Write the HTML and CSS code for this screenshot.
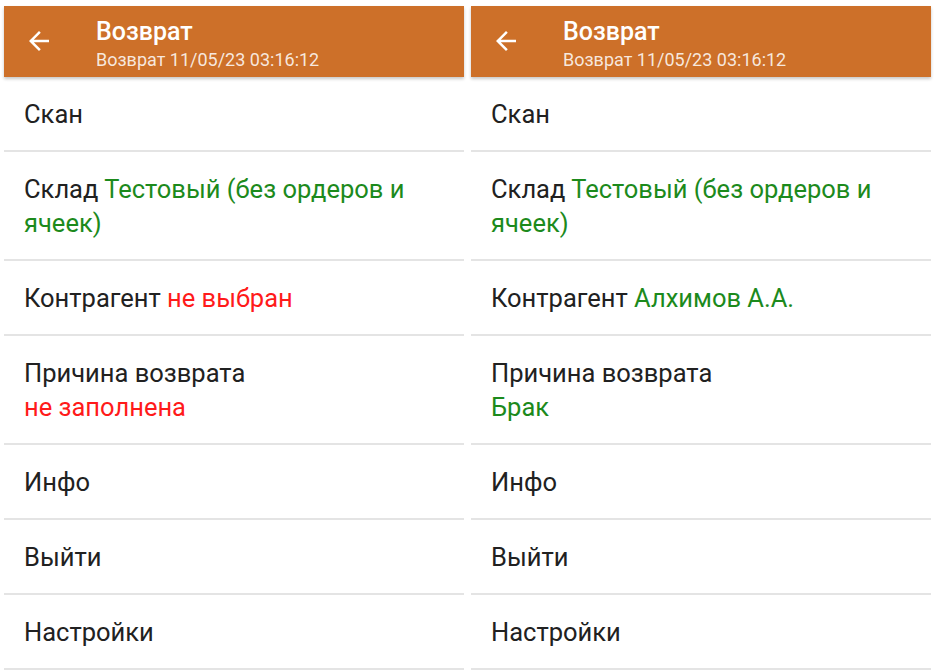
FILE: index.html
```html
<!DOCTYPE html>
<html lang="ru">
<head>
    <meta charset="UTF-8">
    <meta name="viewport" content="width=device-width, initial-scale=1.0">
    <title>Возврат</title>
    <link rel="stylesheet" href="styles.css">
</head>
<body>
    <div class="screen">
        <header class="bar">
            <svg class="back" viewBox="0 0 24 24"><path d="M20 11H7.83l5.59-5.59L12 4l-8 8 8 8 1.41-1.41L7.83 13H20v-2z"/></svg>
            <div class="titles">
                <div class="title">Возврат</div>
                <div class="subtitle">Возврат 11/05/23 03:16:12</div>
            </div>
        </header>
        <ul class="menu">
            <li>Скан</li>
            <li>Склад <span class="ok">Тестовый (без ордеров и ячеек)</span></li>
            <li>Контрагент <span class="bad">не выбран</span></li>
            <li>Причина возврата<br><span class="bad">не заполнена</span></li>
            <li>Инфо</li>
            <li>Выйти</li>
            <li>Настройки</li>
        </ul>
    </div>

    <div class="screen">
        <header class="bar">
            <svg class="back" viewBox="0 0 24 24"><path d="M20 11H7.83l5.59-5.59L12 4l-8 8 8 8 1.41-1.41L7.83 13H20v-2z"/></svg>
            <div class="titles">
                <div class="title">Возврат</div>
                <div class="subtitle">Возврат 11/05/23 03:16:12</div>
            </div>
        </header>
        <ul class="menu">
            <li>Скан</li>
            <li>Склад <span class="ok">Тестовый (без ордеров и ячеек)</span></li>
            <li>Контрагент <span class="ok">Алхимов А.А.</span></li>
            <li>Причина возврата<br><span class="ok">Брак</span></li>
            <li>Инфо</li>
            <li>Выйти</li>
            <li>Настройки</li>
        </ul>
    </div>
</body>
</html>
```

FILE: styles.css
```css
*, *:before, *:after{
    margin: 0;
    padding: 0;
    box-sizing: border-box;
}
body{
    display: flex;
    gap: 7px;
    padding: 6px 0 0 4px;
    background: #fff;
    font-family: Roboto, "Noto Sans", sans-serif;
    color: #212121;
    overflow: hidden;
    height: 670px;
}
.screen{
    width: 460px;
    flex-shrink: 0;
}
.bar{
    position: relative;
    height: 71px;
    display: flex;
    align-items: flex-start;
    background: #cd7029;
    box-shadow: 0 2px 3px rgba(0, 0, 0, 0.22);
    color: #fff;
}
.back{
    width: 30px;
    height: 30px;
    fill: #fff;
    margin: 20px 0 0 20px;
}
.titles{
    margin-left: 42px;
    padding-top: 12px;
}
.title{
    font-size: 25px;
    font-weight: 500;
    line-height: 28px;
}
.subtitle{
    font-size: 18px;
    line-height: 26px;
    margin-top: 1px;
    color: rgba(255, 255, 255, 0.85);
}
.menu{
    list-style: none;
}
.menu li{
    font-size: 25.5px;
    line-height: 34px;
    padding: 20px 20px 19px 20px;
    border-bottom: 2px solid #e4e4e4;
}
.ok{
    color: #1c8a1c;
}
.bad{
    color: #ff1a1a;
}
```
